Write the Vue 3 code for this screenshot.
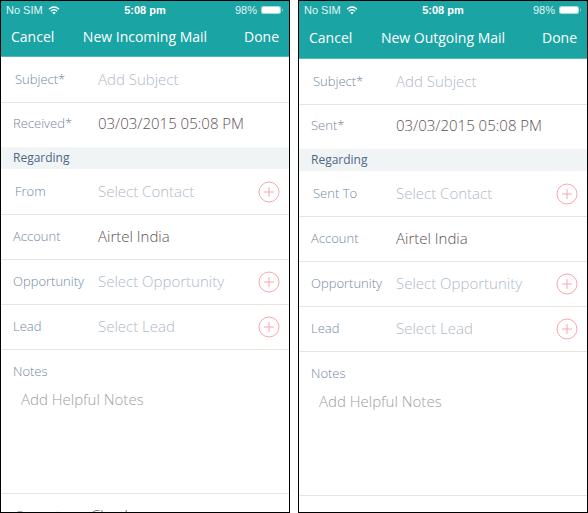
<script setup>
const phones = [
  {
    id: 'incoming',
    title: 'New Incoming Mail',
    dateLabel: 'Received*',
    contactLabel: 'From',
    roomy: false,
  },
  {
    id: 'outgoing',
    title: 'New Outgoing Mail',
    dateLabel: 'Sent*',
    contactLabel: 'Sent To',
    roomy: true,
  },
]

const linksFor = (phone) => [
  { key: 'contact', label: phone.contactLabel, hint: 'Select Contact', value: '', inset: true },
  { key: 'account', label: 'Account', hint: '', value: 'Airtel India' },
  { key: 'opportunity', label: 'Opportunity', hint: 'Select Opportunity', value: '' },
  { key: 'lead', label: 'Lead', hint: 'Select Lead', value: '' },
]
</script>

<template>
  <main class="board">
    <form
      v-for="phone in phones"
      :key="phone.id"
      class="phone"
      :class="{ roomy: phone.roomy }"
      @submit.prevent
    >
      <header class="top">
        <div class="status">
          <span class="carrier">
            No SIM
            <svg class="wifi" viewBox="0 0 12 9" aria-hidden="true">
              <path d="M1 3.2Q6-1.2 11 3.2" />
              <path d="M2.8 5.2Q6 2.4 9.2 5.2" />
              <path class="dot" d="M4.2 6.6Q6 5.2 7.8 6.6L6 8.6Z" />
            </svg>
          </span>
          <strong class="clock">5:08 pm</strong>
          <span class="power">
            98%
            <svg class="battery" viewBox="0 0 23 10" aria-hidden="true">
              <rect class="shell" x="0.5" y="1.5" width="19" height="7" rx="1" />
              <rect x="1" y="2" width="18" height="6" rx="1" />
              <path d="M21 3.2Q22.4 5 21 6.8Z" />
            </svg>
          </span>
        </div>
        <nav class="bar">
          <button type="button" class="action">Cancel</button>
          <h1 class="title">{{ phone.title }}</h1>
          <button type="submit" class="action end">Done</button>
        </nav>
      </header>

      <div class="row inset">
        <label :for="phone.id + '-subject'">Subject*</label>
        <input :id="phone.id + '-subject'" type="text" placeholder="Add Subject" />
      </div>
      <div class="row last">
        <label :for="phone.id + '-date'">{{ phone.dateLabel }}</label>
        <input :id="phone.id + '-date'" type="text" value="03/03/2015 05:08 PM" />
      </div>

      <h2 class="section">Regarding</h2>

      <div v-for="link in linksFor(phone)" :key="link.key" class="row" :class="{ inset: link.inset }">
        <label :for="phone.id + '-' + link.key">{{ link.label }}</label>
        <input
          :id="phone.id + '-' + link.key"
          type="text"
          :placeholder="link.hint"
          :value="link.value"
        />
        <button v-if="link.hint" type="button" class="add" :aria-label="link.hint">
          <svg viewBox="0 0 22 22" aria-hidden="true">
            <circle cx="11" cy="11" r="10" />
            <path d="M11 6V16M6 11H16" />
          </svg>
        </button>
      </div>

      <div class="notes">
        <label :for="phone.id + '-notes'">Notes</label>
        <textarea :id="phone.id + '-notes'" placeholder="Add Helpful Notes"></textarea>
      </div>

      <div class="row inset next">
        <label :for="phone.id + '-current'">Current</label>
        <input :id="phone.id + '-current'" type="text" value="Check" />
      </div>
    </form>
  </main>
</template>

<style>
body {
  margin: 0;
  background: #fff;
}
</style>

<style scoped>
.board {
  display: grid;
  grid-template-columns: 1fr 1fr;
  gap: 8px;
  height: 100vh;
  overflow: hidden;
}

.phone {
  display: flex;
  flex-direction: column;
  box-sizing: border-box;
  min-width: 0;
  min-height: 0;
  overflow: hidden;
  border: 1px solid #000;
  background: #fff;
  font-family: 'Open Sans', 'Noto Sans', sans-serif;
  font-size: 14px;
  font-weight: 300;
  line-height: 20px;
  color: #5c5254;
}

.phone > * {
  flex-shrink: 0;
}

.top {
  box-sizing: border-box;
  height: 56px;
  border-bottom: 1px solid #55b9b9;
  background: #1aa4a4;
  color: #fff;
}

.roomy .top {
  height: 58px;
}

.status {
  display: grid;
  grid-template-columns: 1fr auto 1fr;
  align-items: center;
  height: 18px;
  padding: 0 5px;
  font-family: 'Liberation Sans', Arial, sans-serif;
  font-size: 11px;
  font-weight: 400;
  line-height: 18px;
}

.carrier,
.power {
  display: flex;
  align-items: center;
  gap: 4px;
  color: #e4f5f5;
}

.carrier {
  gap: 5px;
}

.power {
  justify-content: flex-end;
}

.wifi {
  width: 12px;
  height: 9px;
  fill: none;
  stroke: #fff;
  stroke-width: 1.4;
}

.wifi .dot {
  fill: #fff;
  stroke: none;
}

.battery {
  width: 23px;
  height: 10px;
  fill: #fff;
}

.battery .shell {
  fill: none;
  stroke: #a8dcdc;
}

.bar {
  display: grid;
  grid-template-columns: 1fr auto 1fr;
  align-items: center;
  height: 36px;
  padding: 0 10px;
}

.roomy .bar {
  height: 38px;
}

.title,
.action {
  margin: 0;
  padding: 0;
  border: 0;
  background: none;
  color: #fff;
  font: inherit;
  font-weight: 400;
  text-align: left;
}

.action.end {
  text-align: right;
}

.row {
  display: flex;
  align-items: center;
  box-sizing: border-box;
  height: 45px;
  padding: 0 9px 0 12px;
  border-bottom: 1px solid #eae4df;
}

.row.inset {
  height: 46px;
  padding-left: 14px;
}

.row.last {
  height: 44px;
  padding-bottom: 2px;
  border-bottom: 0;
}

label {
  flex: 0 0 85px;
  font-size: 13px;
  color: #7389a1;
}

.inset label {
  flex-basis: 83px;
}

input,
textarea {
  flex: 1;
  min-width: 0;
  padding: 0;
  border: 0;
  outline: 0;
  background: none;
  color: inherit;
  font: inherit;
  font-size: 15px;
}

.row label,
.row input {
  padding-bottom: 2px;
}

input::placeholder {
  color: #b0bac6;
  opacity: 1;
}

.section {
  margin: 0;
  padding: 0 12px;
  background: #f0f4f5;
  color: #4d6884;
  font-size: 12px;
  font-weight: 400;
  line-height: 22px;
}

.add {
  display: flex;
  padding: 0;
  border: 0;
  background: none;
}

.add svg {
  width: 22px;
  height: 22px;
  fill: none;
  stroke: #fba6ae;
}

.notes {
  display: flex;
  flex-direction: column;
  box-sizing: border-box;
  height: 144px;
  padding: 11px 12px;
  border-bottom: 1px solid #eae4df;
}

.notes label {
  flex: 0 0 auto;
}

.notes textarea {
  margin-top: 8px;
  padding-left: 8px;
  resize: none;
}

.notes textarea::placeholder {
  color: #a0a0a0;
  opacity: 1;
}

.row.next {
  height: 44px;
  border-bottom: 0;
}

.next label {
  flex-basis: 76px;
}
</style>
